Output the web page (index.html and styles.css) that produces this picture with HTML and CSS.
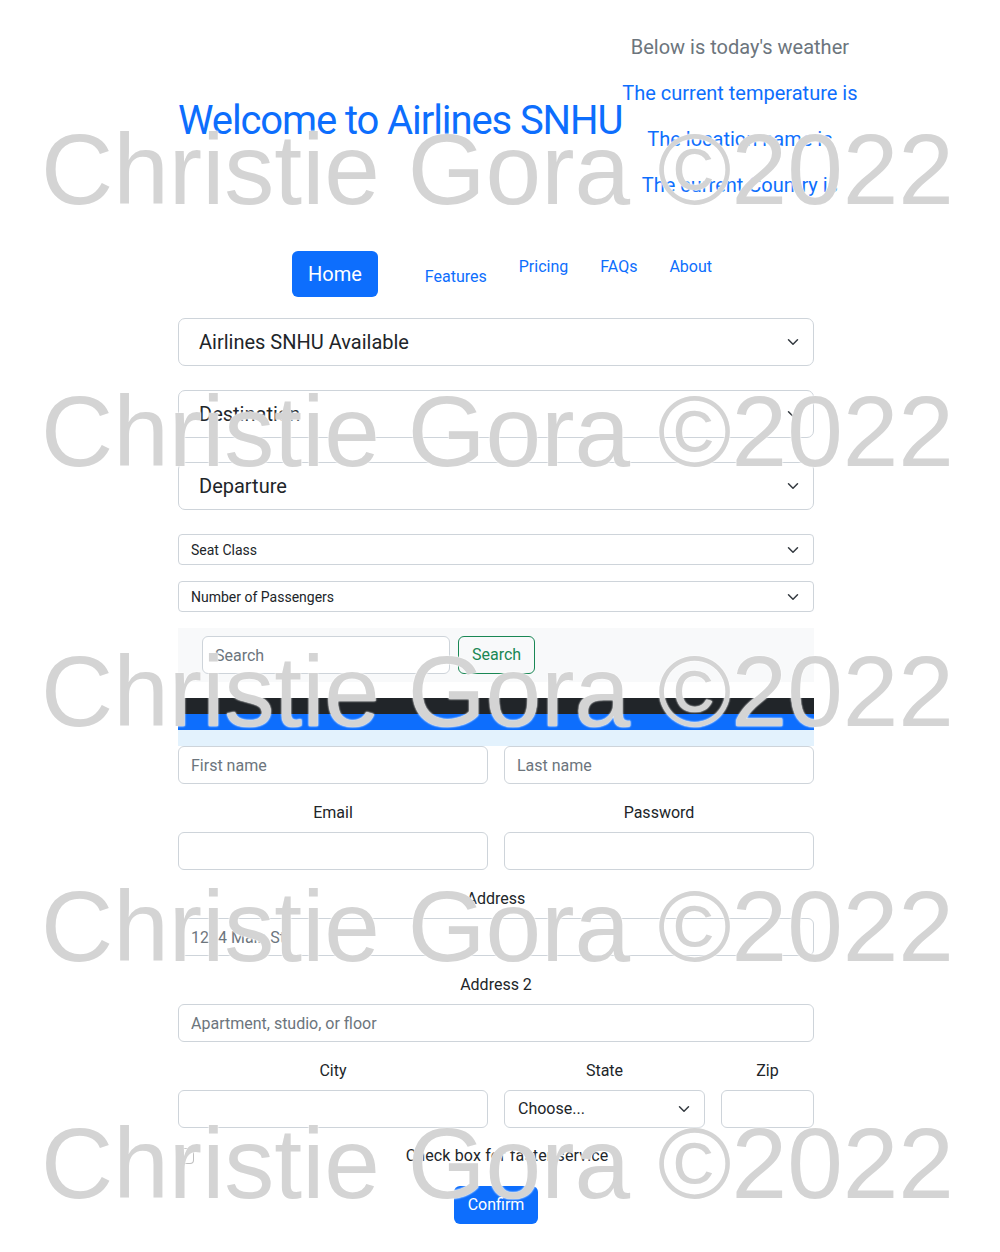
FILE: index.html
```html
<!DOCTYPE html>
<html lang="en">
<head>
<meta charset="utf-8">
<title>Airlines SNHU</title>
<link rel="stylesheet" href="styles.css">
</head>
<body>
<div class="page">
  <header class="header">
    <h1 class="title">Welcome to Airlines SNHU</h1>
    <div class="weather">
      <p class="weather-intro">Below is today's weather</p>
      <p class="weather-line">The current temperature is</p>
      <p class="weather-line">The location name is</p>
      <p class="weather-line last">The current Country is</p>
    </div>
  </header>

  <nav class="nav">
    <a class="nav-home" href="#">Home</a>
    <a class="nav-link nav-features" href="#">Features</a>
    <a class="nav-link" href="#">Pricing</a>
    <a class="nav-link" href="#">FAQs</a>
    <a class="nav-link" href="#">About</a>
  </nav>

  <div class="select select-lg first">
    <span>Airlines SNHU Available</span>
    <svg class="chev" viewBox="0 0 16 16"><path d="m2 5 6 6 6-6"/></svg>
  </div>
  <div class="select select-lg">
    <span>Destination</span>
    <svg class="chev" viewBox="0 0 16 16"><path d="m2 5 6 6 6-6"/></svg>
  </div>
  <div class="select select-lg">
    <span>Departure</span>
    <svg class="chev" viewBox="0 0 16 16"><path d="m2 5 6 6 6-6"/></svg>
  </div>
  <div class="select select-sm gap24">
    <span>Seat Class</span>
    <svg class="chev" viewBox="0 0 16 16"><path d="m2 5 6 6 6-6"/></svg>
  </div>
  <div class="select select-sm gap16">
    <span>Number of Passengers</span>
    <svg class="chev" viewBox="0 0 16 16"><path d="m2 5 6 6 6-6"/></svg>
  </div>

  <div class="searchbar">
    <input class="search-input" type="text" placeholder="Search">
    <button class="search-btn" type="button">Search</button>
  </div>

  <div class="bars">
    <div class="bar bar-dark"></div>
    <div class="bar bar-blue"></div>
    <div class="bar bar-light"></div>
  </div>

  <form class="form">
    <div class="row two">
      <input class="input" type="text" placeholder="First name">
      <input class="input" type="text" placeholder="Last name">
    </div>
    <div class="row two spaced">
      <div class="field"><label class="label">Email</label><input class="input" type="email"></div>
      <div class="field"><label class="label">Password</label><input class="input" type="password"></div>
    </div>
    <div class="field spaced">
      <label class="label">Address</label>
      <input class="input" type="text" placeholder="1234 Main St">
    </div>
    <div class="field spaced">
      <label class="label">Address 2</label>
      <input class="input" type="text" placeholder="Apartment, studio, or floor">
    </div>
    <div class="row three spaced">
      <div class="field"><label class="label">City</label><input class="input" type="text"></div>
      <div class="field"><label class="label">State</label>
        <div class="select select-md">
          <span>Choose...</span>
          <svg class="chev" viewBox="0 0 16 16"><path d="m2 5 6 6 6-6"/></svg>
        </div>
      </div>
      <div class="field"><label class="label">Zip</label><input class="input" type="text"></div>
    </div>
    <div class="check-row spaced">
      <span class="checkbox"></span>
      <label class="check-label">Check box for faster service</label>
    </div>
    <div class="submit-row">
      <button class="confirm" type="button">Confirm</button>
    </div>
  </form>
</div>

<div class="watermark" aria-hidden="true">
  <div class="wm wm1">Christie Gora ©2022</div>
  <div class="wm wm2">Christie Gora ©2022</div>
  <div class="wm wm3">Christie Gora ©2022</div>
  <div class="wm wm4">Christie Gora ©2022</div>
  <div class="wm wm5">Christie Gora ©2022</div>
</div>
</body>
</html>
```

FILE: styles.css
```css
* { box-sizing: border-box; }

html, body {
  margin: 0;
  padding: 0;
  background: #fff;
}

body {
  font-family: Roboto, "Liberation Sans", Arial, sans-serif;
  font-size: 16px;
  line-height: 24px;
  color: #212529;
  position: relative;
  min-height: 1252px;
}

.page {
  width: 636px;
  margin-left: 178px;
  padding-top: 35px;
}

/* header */
.header {
  display: flex;
  align-items: center;
}

.title {
  margin: 0;
  padding-top: 9px;
  font-size: 40px;
  line-height: 48px;
  font-weight: 400;
  color: #0d6efd;
  white-space: nowrap;
  letter-spacing: -1.1px;
}

.weather {
  text-align: center;
  font-size: 20px;
  line-height: 24px;
}

.weather p {
  margin: 0 0 22px;
  white-space: nowrap;
}

.weather p.last { margin-bottom: 0; }

.weather-intro { color: #6c757d; }
.weather-line { color: #0d6efd; }

/* nav */
.nav {
  display: flex;
  align-items: flex-start;
  margin-top: 50px;
  padding-left: 114px;
}

.nav a { text-decoration: none; }

.nav-home {
  margin-top: 4px;
  padding: 8px 16px;
  font-size: 20px;
  line-height: 30px;
  background: #0d6efd;
  color: #fff;
  border-radius: 6px;
}

.nav-link {
  padding: 8px 16px;
  color: #0d6efd;
}

.nav-features {
  margin-left: 31px;
  margin-top: 10px;
}

/* selects */
.select {
  display: flex;
  align-items: center;
  justify-content: space-between;
  background: #fff;
  border: 1px solid #ced4da;
  color: #212529;
}

.select-lg {
  height: 48px;
  margin-top: 24px;
  padding: 0 12px 0 20px;
  font-size: 20px;
  border-radius: 7px;
}

.select-lg.first { margin-top: 21px; }

.select-sm {
  height: 31px;
  padding: 0 12px 0 12px;
  font-size: 14px;
  border-radius: 4px;
}

.gap24 { margin-top: 24px; }
.gap16 { margin-top: 16px; }

.select-md {
  height: 38px;
  padding: 0 12px 0 13px;
  font-size: 16px;
  border-radius: 6px;
}

.chev {
  width: 16px;
  height: 12px;
  flex: none;
}

.chev path {
  fill: none;
  stroke: #343a40;
  stroke-width: 2;
  stroke-linecap: round;
  stroke-linejoin: round;
}

/* search bar */
.searchbar {
  margin-top: 16px;
  display: flex;
  gap: 8px;
  padding: 8px 24px;
  background: #f8f9fa;
}

.search-input {
  width: 248px;
  height: 38px;
  padding: 0 12px;
  border: 1px solid #ced4da;
  border-radius: 6px;
  font: inherit;
  color: #212529;
  background: #fff;
}

.search-input::placeholder { color: #6c757d; }

.search-btn {
  height: 38px;
  padding: 0 13px;
  border: 1px solid #198754;
  border-radius: 6px;
  background: transparent;
  color: #198754;
  font: inherit;
}

/* bars */
.bars { margin-top: 16px; }
.bar { height: 16px; }
.bar-dark { background: #212529; }
.bar-blue { background: #0d6efd; }
.bar-light { background: #e3f2fd; }

/* form */
.form { margin: 0; }

.row { display: grid; column-gap: 16px; }
.row.two { grid-template-columns: 1fr 1fr; }
.row.three { grid-template-columns: 310px 201px 1fr; }

.spaced { margin-top: 16px; }

.field { display: flex; flex-direction: column; }

.label {
  display: block;
  text-align: center;
  line-height: 24px;
  margin-bottom: 8px;
  padding-top: 1px;
}

.field .input, .field .select { margin-top: -1px; }

.input {
  width: 100%;
  height: 38px;
  padding: 0 12px;
  border: 1px solid #ced4da;
  border-radius: 6px;
  font: inherit;
  color: #212529;
  background: #fff;
}

.input::placeholder { color: #6c757d; }

.check-row {
  display: flex;
  align-items: center;
  height: 24px;
}

.checkbox {
  width: 16px;
  height: 16px;
  border: 1px solid rgba(0, 0, 0, 0.25);
  border-radius: 4px;
  background: #fff;
  flex: none;
}

.check-label {
  flex: 1;
  margin-left: 8px;
  padding-right: 2px;
  text-align: center;
  letter-spacing: 0.15px;
}

.submit-row {
  display: flex;
  justify-content: center;
  margin-top: 18px;
}

.confirm {
  height: 38px;
  padding: 0 14px;
  border: none;
  border-radius: 6px;
  background: #0d6efd;
  color: #fff;
  font: inherit;
}

/* watermark overlay */
.watermark {
  position: absolute;
  top: 0;
  left: 0;
  width: 1000px;
  pointer-events: none;
  z-index: 10;
}

.wm {
  position: absolute;
  left: 41px;
  font-family: "Liberation Sans", Arial, sans-serif;
  font-size: 100px;
  line-height: 100px;
  color: #d4d4d4;
  white-space: nowrap;
  text-shadow: 0 0 2px #fff, 0 0 2px #fff;
}

.wm1 { top: 119px; }
.wm2 { top: 381px; }
.wm3 { top: 641px; }
.wm4 { top: 876px; }
.wm5 { top: 1113px; }
```
